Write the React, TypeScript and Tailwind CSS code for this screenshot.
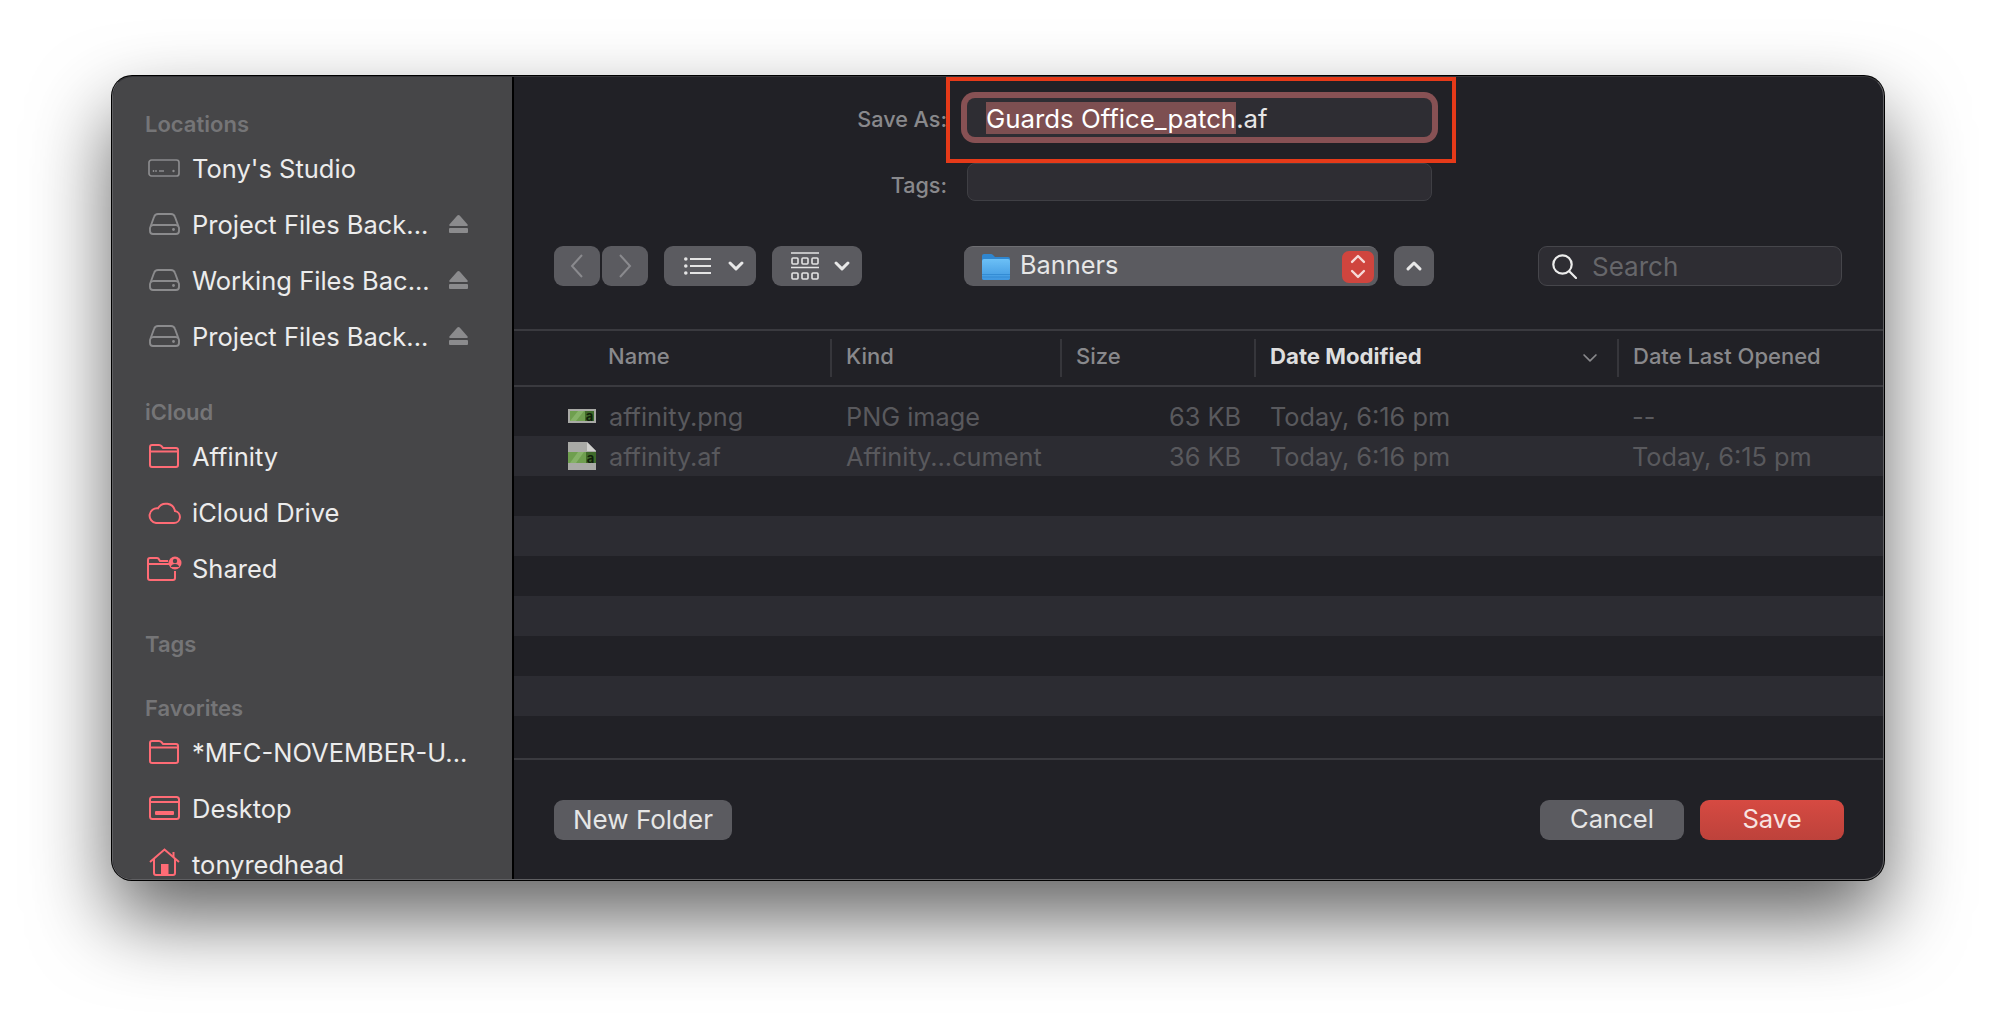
import type { ReactNode } from 'react';

const gray = '#8b8b8d';
const red = '#ff6b75';

const StudioIcon = () => (
  <svg width="32" height="18" viewBox="0 0 32 18" fill="none" stroke={gray} strokeWidth="1.7">
    <rect x="1" y="1" width="30" height="16" rx="2.5" />
    <path d="M5.5 11v2M8 11v2M11 12h5" strokeWidth="1.4" />
    <circle cx="25.5" cy="12" r="1.2" fill={gray} stroke="none" />
  </svg>
);

const DriveIcon = () => (
  <svg width="31" height="22" viewBox="0 0 31 22" fill="none" stroke={gray} strokeWidth="1.9">
    <path d="M1 15 5 4Q6 1 9 1H22Q25 1 26 4L30 15V18Q30 21 27 21H4Q1 21 1 18Z" />
    <path d="M1.5 13.2Q2.5 12 4.5 12H26.5Q28.5 12 29.5 13.2" />
    <circle cx="24.5" cy="16.5" r="1.4" fill={gray} stroke="none" />
  </svg>
);

const EjectIcon = () => (
  <svg width="19" height="18" viewBox="0 0 19 18" fill={gray}>
    <path d="M8.3.6Q9.5-.4 10.7.6L18.6 9.4Q19.3 11 17.8 11H1.2Q-.3 11 .4 9.4Z" />
    <rect x="0" y="13" width="19" height="5" rx="1" />
  </svg>
);

const FolderIcon = () => (
  <svg width="30" height="24" viewBox="0 0 30 24" fill="none" stroke={red} strokeWidth="2">
    <path d="M1 3Q1 1 3 1H10Q11.5 1 12.5 2.2L14 4H27Q29 4 29 6V21Q29 23 27 23H3Q1 23 1 21Z" />
    <path d="M1 7.5H29" />
  </svg>
);

const CloudIcon = () => (
  <svg width="33" height="23" viewBox="0 0 33 23" fill="none" stroke={red} strokeWidth="2">
    <path d="M8 22H26A6 6 0 0 0 27 10.1 9.2 9.2 0 0 0 10 7.3 7.4 7.4 0 0 0 8 22Z" />
  </svg>
);

const SharedIcon = () => (
  <svg width="35" height="25" viewBox="0 0 35 25" fill="none" stroke={red} strokeWidth="2">
    <path d="M21 5H13L11.5 2.6Q10.8 2 10 2H3Q1 2 1 4V22Q1 24 3 24H26Q28 24 28 22V15" />
    <path d="M1 8H22" />
    <circle cx="28" cy="7" r="6.5" fill={red} stroke="none" />
    <circle cx="28" cy="5" r="2.2" fill="#464648" stroke="none" />
    <path d="M23.8 11Q24.5 8 28 8T32.2 11Z" fill="#464648" stroke="none" />
  </svg>
);

const DesktopIcon = () => (
  <svg width="31" height="24" viewBox="0 0 31 24" fill="none" stroke={red} strokeWidth="2">
    <rect x="1" y="1" width="29" height="22" rx="2.5" />
    <path d="M1 6H30" />
    <rect x="6" y="15" width="19" height="4" rx="1" fill={red} stroke="none" />
  </svg>
);

const HomeIcon = () => (
  <svg className="-mt-[4px]" width="31" height="28" viewBox="0 0 31 28" fill="none" stroke={red} strokeWidth="2">
    <path d="M1 14 15.5 1.5 30 14" />
    <path d="M24.5 9V4" />
    <path d="M5 11V25Q5 27 7 27H24Q26 27 26 25V11" />
    <rect x="12" y="16" width="7.5" height="11" fill={red} stroke="none" />
  </svg>
);

const SidebarHeader = ({ children }: { children: ReactNode }) => (
  <div className="h-[32px] flex items-center text-[22px] font-semibold text-[#757577]">{children}</div>
);

const SidebarItem = ({ icon, label, eject }: { icon: ReactNode; label: string; eject?: boolean }) => (
  <div className="h-[56px] flex items-center text-[25.5px] text-[#ececec] whitespace-nowrap">
    <div className="w-[38px] mr-[9px] flex justify-center shrink-0">{icon}</div>
    <span className="pt-[2px]">{label}</span>
    {eject && (
      <div className="ml-auto">
        <EjectIcon />
      </div>
    )}
  </div>
);

const Sidebar = () => (
  <div className="w-[401px] shrink-0 h-full bg-[#464648] border-r-2 border-black pl-[32px] pr-[44px] pt-[31px] overflow-hidden">
    <SidebarHeader>Locations</SidebarHeader>
    <SidebarItem icon={<StudioIcon />} label="Tony's Studio" />
    <SidebarItem icon={<DriveIcon />} label="Project Files Back..." eject />
    <SidebarItem icon={<DriveIcon />} label="Working Files Bac..." eject />
    <SidebarItem icon={<DriveIcon />} label="Project Files Back..." eject />
    <div className="mt-[32px]">
      <SidebarHeader>iCloud</SidebarHeader>
      <SidebarItem icon={<FolderIcon />} label="Affinity" />
      <SidebarItem icon={<CloudIcon />} label="iCloud Drive" />
      <SidebarItem icon={<SharedIcon />} label="Shared" />
    </div>
    <div className="mt-[32px]">
      <SidebarHeader>Tags</SidebarHeader>
    </div>
    <div className="mt-[32px]">
      <SidebarHeader>Favorites</SidebarHeader>
      <SidebarItem icon={<FolderIcon />} label="*MFC-NOVEMBER-U..." />
      <SidebarItem icon={<DesktopIcon />} label="Desktop" />
      <SidebarItem icon={<HomeIcon />} label="tonyredhead" />
    </div>
  </div>
);

const Chevron = ({ up, size = 16, color = '#e8e8e8', width = 3 }: { up?: boolean; size?: number; color?: string; width?: number }) => (
  <svg width={size} height={size * 0.62} viewBox="0 0 16 10" fill="none" stroke={color} strokeWidth={width} strokeLinecap="round" strokeLinejoin="round">
    <path d={up ? 'M2 8 8 2 14 8' : 'M2 2 8 8 14 2'} />
  </svg>
);

const NavArrow = ({ d }: { d: string }) => (
  <svg width="14" height="24" viewBox="0 0 14 24" fill="none" stroke="#8a8a8e" strokeWidth="2">
    <path d={d} />
  </svg>
);

const ListIcon = () => (
  <svg width="27" height="18" viewBox="0 0 27 18" fill="#e4e4e4">
    <circle cx="1.8" cy="2" r="1.8" />
    <circle cx="1.8" cy="9" r="1.8" />
    <circle cx="1.8" cy="16" r="1.8" />
    <rect x="6" y="1" width="21" height="2" />
    <rect x="6" y="8" width="21" height="2" />
    <rect x="6" y="15" width="21" height="2" />
  </svg>
);

const GroupIcon = () => (
  <svg width="28" height="28" viewBox="0 0 28 28" fill="none" stroke="#e4e4e4" strokeWidth="1.6">
    <path d="M0 1H28M0 15.5H28" />
    <rect x="1" y="6" width="6" height="6" rx="1" />
    <rect x="11" y="6" width="6" height="6" rx="1" />
    <rect x="21" y="6" width="6" height="6" rx="1" />
    <rect x="1" y="21" width="6" height="6" rx="1" />
    <rect x="11" y="21" width="6" height="6" rx="1" />
    <rect x="21" y="21" width="6" height="6" rx="1" />
  </svg>
);

const BlueFolder = () => (
  <svg width="28" height="26" viewBox="0 0 28 26">
    <defs>
      <linearGradient id="blue" x1="0" y1="0" x2="0" y2="1">
        <stop offset="0" stopColor="#6cc0f6" />
        <stop offset="1" stopColor="#3f97e0" />
      </linearGradient>
    </defs>
    <path d="M0 2Q0 0 2 0H9Q10 0 11 1L13 3H26Q28 3 28 5V24Q28 26 26 26H2Q0 26 0 24Z" fill="#2f86cf" />
    <path d="M0 7Q0 5 2 5H26Q28 5 28 7V24Q28 26 26 26H2Q0 26 0 24Z" fill="url(#blue)" />
    <path d="M0 20.5H28M0 23H28" stroke="#2f86cf" strokeWidth="0.8" />
  </svg>
);

const SearchIcon = () => (
  <svg width="25" height="25" viewBox="0 0 25 25" fill="none" stroke="#ececec" strokeWidth="2.2">
    <circle cx="10.5" cy="10.5" r="9.2" />
    <path d="M17.5 17.5 24 24" strokeLinecap="round" />
  </svg>
);

const PngIcon = () => (
  <svg width="28" height="14" viewBox="0 0 28 14">
    <rect width="28" height="14" fill="#a9aaa6" />
    <rect x="2" y="2" width="24" height="10" fill="#6f9f4f" />
    <path d="M2 12 10 2H16L8 12Z" fill="#86b268" />
    <rect x="17" y="2" width="9" height="10" fill="#3f6a2a" />
    <text x="21.5" y="11.5" fontSize="13" fontWeight="700" textAnchor="middle" fill="#10200a" fontFamily="Inter, sans-serif">a</text>
  </svg>
);

const AfIcon = () => (
  <svg width="28" height="28" viewBox="0 0 28 28">
    <path d="M0 0H19L28 9V28H0Z" fill="#a9aaa6" />
    <path d="M19 0 28 9H19Z" fill="#d0d0cd" />
    <rect y="10" width="28" height="11" fill="#6f9f4f" />
    <path d="M2 21 10 10H16L8 21Z" fill="#86b268" />
    <rect x="18" y="10" width="10" height="11" fill="#3f6a2a" />
    <text x="22.5" y="20.5" fontSize="13" fontWeight="700" textAnchor="middle" fill="#10200a" fontFamily="Inter, sans-serif">a</text>
  </svg>
);

const Toolbar = () => (
  <div className="mt-[45px] h-[40px] pl-[40px] flex items-stretch">
    <div className="w-[46px] rounded-[9px] bg-[#5b5b60] flex items-center justify-center">
      <NavArrow d="M12 1 2 12 12 23" />
    </div>
    <div className="ml-[2px] w-[46px] rounded-[9px] bg-[#5b5b60] flex items-center justify-center">
      <NavArrow d="M2 1 12 12 2 23" />
    </div>
    <div className="ml-[16px] w-[92px] rounded-[9px] bg-[#5b5b60] flex items-center pl-[20px]">
      <ListIcon />
      <div className="ml-[17px]">
        <Chevron />
      </div>
    </div>
    <div className="ml-[16px] w-[90px] rounded-[9px] bg-[#5b5b60] flex items-center pl-[19px]">
      <GroupIcon />
      <div className="ml-[15px]">
        <Chevron />
      </div>
    </div>
    <div className="ml-[102px] w-[414px] rounded-[9px] bg-[#5b5b60] border-t border-[#6e6e72] flex items-center pl-[18px] pr-[4px]">
      <BlueFolder />
      <span className="ml-[10px] pb-[4px] text-[25.3px] text-[#e6e6e6]">Banners</span>
      <div className="ml-auto w-[32px] h-[32px] rounded-[7px] bg-[#cf453e] flex flex-col items-center justify-center gap-[5px]">
        <Chevron up color="#f6dad8" width={2.4} />
        <Chevron color="#f6dad8" width={2.4} />
      </div>
    </div>
    <div className="ml-[16px] w-[40px] rounded-[9px] bg-[#5b5b60] flex items-center justify-center">
      <Chevron up />
    </div>
    <div className="ml-[104px] w-[304px] rounded-[9px] bg-[#2e2d33] border border-[#46464b] flex items-center pl-[13px]">
      <SearchIcon />
      <span className="ml-[15px] text-[26px] text-[#66666a]">Search</span>
    </div>
  </div>
);

const columns = 'grid grid-cols-[316px_230px_194px_363px_1fr]';

const HeaderCell = ({ children, bold, last }: { children: ReactNode; bold?: boolean; last?: boolean }) => (
  <div className={`h-[38px] border-l-2 border-[#36363b] pl-[14px] pb-[4px] flex items-center ${bold ? 'text-[22.2px] font-bold text-[#dedede]' : 'text-[22px] font-medium text-[#89898c]'} ${last ? 'pr-[19px]' : ''}`}>
    {children}
  </div>
);

const TableHeader = () => (
  <div className={`mt-[43px] h-[58px] border-y-2 border-[#3a3a3f] items-center ${columns}`}>
    <div className="pl-[94px] pb-[4px] text-[22px] font-medium text-[#89898c]">Name</div>
    <HeaderCell>Kind</HeaderCell>
    <HeaderCell>Size</HeaderCell>
    <HeaderCell bold last>
      <span>Date Modified</span>
      <span className="ml-auto pt-[4px]">
        <Chevron size={16} color="#89898c" width={1.7} />
      </span>
    </HeaderCell>
    <HeaderCell>Date Last Opened</HeaderCell>
  </div>
);

const files = [
  { name: 'affinity.png', kind: 'PNG image', size: '63 KB', modified: 'Today, 6:16 pm', opened: '--', icon: <PngIcon /> },
  { name: 'affinity.af', kind: 'Affinity...cument', size: '36 KB', modified: 'Today, 6:16 pm', opened: 'Today, 6:15 pm', icon: <AfIcon /> },
];

const FileRow = ({ file, alt }: { file: (typeof files)[number]; alt: boolean }) => (
  <div className={`h-[40px] items-center text-[25.3px] text-[#59595d] whitespace-nowrap ${columns} ${alt ? 'bg-[#2c2c32]' : ''}`}>
    <div className="pl-[54px] flex items-center">
      <div className="w-[28px] mr-[13px] flex justify-center">{file.icon}</div>
      <span className="pt-[2px]">{file.name}</span>
    </div>
    <div className="pl-[16px] pt-[2px]">{file.kind}</div>
    <div className="pr-[13px] pt-[2px] text-right">{file.size}</div>
    <div className="pl-[16px] pt-[2px]">{file.modified}</div>
    <div className="pl-[15px] pt-[2px]">{file.opened}</div>
  </div>
);

const stripes = [2, 3, 4, 5, 6, 7, 8];

const FileList = () => (
  <div className="pt-[9px]">
    {files.map((file, i) => (
      <FileRow key={file.name} file={file} alt={i === 1} />
    ))}
    {stripes.map((n) => (
      <div key={n} className={`h-[40px] ${n % 2 === 1 ? 'bg-[#2c2c32]' : ''}`} />
    ))}
  </div>
);

const Footer = () => (
  <div className="mt-[2px] border-t-2 border-[#3a3a3f] pt-[40px] pl-[40px] pr-[39px] flex text-[26px] text-[#e6e6e6]">
    <button className="w-[178px] h-[40px] pb-[4px] rounded-[9px] bg-[#5b5b60]">New Folder</button>
    <button className="ml-auto w-[144px] h-[40px] pb-[4px] rounded-[9px] bg-[#5b5b60] text-[25.6px]">Cancel</button>
    <button className="ml-[16px] w-[144px] h-[40px] pb-[4px] rounded-[9px] bg-gradient-to-b from-[#d64a42] to-[#bd423b] text-[#f8e4e2] text-[25.6px]">Save</button>
  </div>
);

const Form = () => (
  <div className="pt-[21px]">
    <div className="h-[39px] flex items-center">
      <div className="w-[433px] pt-[4px] text-right text-[21.6px] font-medium text-[#89898c]">Save As:</div>
      <div className="ml-[20px] w-[465px] h-full rounded-[8px] bg-[#2e2d33] ring-[6px] ring-[#875154] flex items-center pl-[19px] text-[25.8px] whitespace-nowrap">
        <span className="h-[32px] leading-[34px] bg-[#7d4f51] text-white">Guards Office_patch</span>
        <span className="h-[32px] leading-[34px] text-[#e6e6e6]">.af</span>
      </div>
    </div>
    <div className="mt-[26px] h-[38px] flex items-center">
      <div className="w-[433px] pt-[6px] text-right text-[21.6px] font-medium text-[#89898c]">Tags:</div>
      <div className="ml-[20px] w-[465px] h-full rounded-[8px] bg-[#2e2d33] border border-[#3f3f44]" />
    </div>
  </div>
);

export default function App() {
  return (
    <div className="relative w-[1996px] h-[1028px] overflow-hidden bg-white pl-[112px] pt-[76px] font-[Inter,sans-serif] antialiased">
      <div className="w-[1772px] h-[804px] rounded-[20px] flex overflow-hidden border border-[#5f5f62] border-t-[#36363a] ring-1 ring-black bg-[#212126] shadow-[0_38px_80px_rgba(0,0,0,0.62)]">
        <Sidebar />
        <div className="flex-1 min-w-0">
          <Form />
          <Toolbar />
          <TableHeader />
          <FileList />
          <Footer />
        </div>
      </div>
      <div className="absolute left-[946px] top-[77px] w-[510px] h-[86px] border-4 border-[#e63a19]" />
    </div>
  );
}
